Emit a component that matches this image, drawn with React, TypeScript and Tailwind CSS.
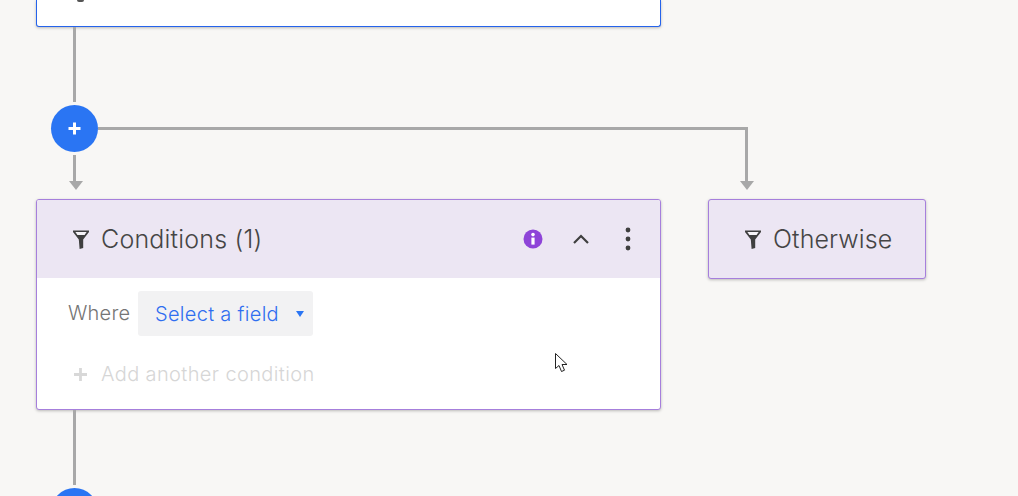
import React from "react";

const Funnel = () => (
  <svg width="16" height="19" viewBox="0 0 16 19" className="shrink-0">
    <path d="M0 0.5H16V2L10.2 9.5V18L6.6 19L5.8 9.5L0 2Z" fill="#3f3f3f" />
    <path d="M2.4 2H13.6L11.6 5H4.4Z" fill="#f6f4f8" />
  </svg>
);

const Arrow = ({ className }: { className: string }) => (
  <svg width="14" height="9" viewBox="0 0 14 9" className={`block -mt-px shrink-0 ${className}`}>
    <path d="M0 0H14L7 9Z" fill="#a8a8a8" />
  </svg>
);

const PlusButton = () => (
  <div className="w-[47px] h-[47px] shrink-0 mt-[3px] ml-[15px] rounded-full bg-[#2a75f3] flex items-center justify-center">
    <svg width="13" height="13" viewBox="0 0 13 13">
      <path d="M6.5 0.5V12.5M0.5 6.5H12.5" stroke="#fff" strokeWidth="3" />
    </svg>
  </div>
);

export default function App() {
  return (
    <div
      className="relative w-[1018px] h-[496px] overflow-hidden bg-[#f8f7f5] flex items-start pl-[36px]"
      style={{ fontFamily: "Inter, 'Noto Sans', sans-serif" }}
    >
      {/* main branch */}
      <div className="w-[625px] flex flex-col">
        {/* trigger card, cut off by the top edge */}
        <div className="h-[27px] shrink-0 bg-white border border-t-0 border-[#2563eb] rounded-b-[3px] shadow-[0_1px_3px_rgba(0,0,0,0.25)] pl-[40px]">
          <div className="w-[7px] h-[2px] rounded-b-full bg-[#555]" />
        </div>
        <div className="w-[3px] h-[75px] shrink-0 ml-[37px] bg-[#a8a8a8]" />
        <PlusButton />
        <div className="w-[3px] h-[27px] shrink-0 mt-[3px] ml-[37px] bg-[#a8a8a8]" />
        <Arrow className="ml-[33px]" />

        {/* conditions node */}
        <div className="h-[211px] shrink-0 mt-[9px] bg-white border border-[#a67fdc] rounded-[3px] shadow-[0_1px_3px_rgba(0,0,0,0.25)] overflow-hidden flex flex-col">
          <div className="h-[78px] shrink-0 bg-[#ece6f3] flex items-center pl-[36px] pr-[29px]">
            <Funnel />
            <span className="ml-[12px] text-[25px] leading-[30px] tracking-[0.2px] font-light text-[#454545]">Conditions (1)</span>
            <div className="ml-auto flex items-center">
              <svg width="20" height="20" viewBox="0 0 20 20">
                <circle cx="10" cy="10" r="9.5" fill="#8e44d8" />
                <circle cx="10" cy="5.6" r="1.8" fill="#fff" />
                <rect x="8.4" y="8.6" width="3.2" height="7" fill="#fff" />
              </svg>
              <svg width="16" height="10" viewBox="0 0 16 10" className="ml-[30px]">
                <path d="M1 9L8 2L15 9" fill="none" stroke="#3f3f3f" strokeWidth="2.2" />
              </svg>
              <svg width="6" height="24" viewBox="0 0 6 24" className="ml-[36px]">
                <circle cx="3" cy="3" r="2.4" fill="#3f3f3f" />
                <circle cx="3" cy="12" r="2.4" fill="#3f3f3f" />
                <circle cx="3" cy="21" r="2.4" fill="#3f3f3f" />
              </svg>
            </div>
          </div>
          <div className="flex items-center pl-[31px] pt-[13px]">
            <span className="w-[62px] text-[20px] tracking-[0.25px] font-light text-[#757575] mr-[8px] -mt-[2px]">Where</span>
            <div className="w-[175px] h-[45px] bg-[#f2f2f3] rounded-[3px] flex items-center pl-[17px]">
              <span className="text-[20px] tracking-[0.3px] font-light text-[#2f6ef0] whitespace-nowrap">Select a field</span>
              <svg width="8" height="6" viewBox="0 0 8 6" className="ml-[17px]">
                <path d="M0 0H8L4 6Z" fill="#2a75f3" />
              </svg>
            </div>
          </div>
          <div className="flex items-center pl-[37px] pt-[23px]">
            <svg width="13" height="13" viewBox="0 0 13 13">
              <path d="M6.5 0V13M0 6.5H13" stroke="#d8d8d8" strokeWidth="2.8" />
            </svg>
            <span className="ml-[14px] text-[20px] tracking-[0.38px] font-light text-[#d6d6d6] whitespace-nowrap">Add another condition</span>
          </div>
        </div>

        <div className="w-[3px] h-[75px] shrink-0 ml-[37px] bg-[#a8a8a8]" />
        <PlusButton />
      </div>

      {/* otherwise branch */}
      <div className="w-[218px] ml-[47px] pt-[127px] flex flex-col">
        <div className="w-[3px] h-[55px] shrink-0 ml-[37px] bg-[#a8a8a8]" />
        <Arrow className="ml-[32px]" />
        <div className="h-[80px] mt-[9px] bg-[#ece6f3] border border-[#a67fdc] rounded-[3px] shadow-[0_1px_3px_rgba(0,0,0,0.25)] flex items-center pl-[36px]">
          <Funnel />
          <span className="ml-[12px] text-[25px] leading-[30px] tracking-[0.1px] font-light text-[#454545]">Otherwise</span>
        </div>
      </div>

      {/* connector between the two branches */}
      <div className="absolute left-[98px] top-[127px] w-[650px] h-[3px] bg-[#a8a8a8]" />

      {/* mouse pointer */}
      <svg width="14" height="21" viewBox="0 0 14 21" className="absolute left-[555px] top-[353px]">
        <path d="M0.5 0.5V15.5L4 12.5L6.5 18.5L9.5 17.2L7 11.5H12Z" fill="#fff" stroke="#222" strokeWidth="1" />
      </svg>
    </div>
  );
}
